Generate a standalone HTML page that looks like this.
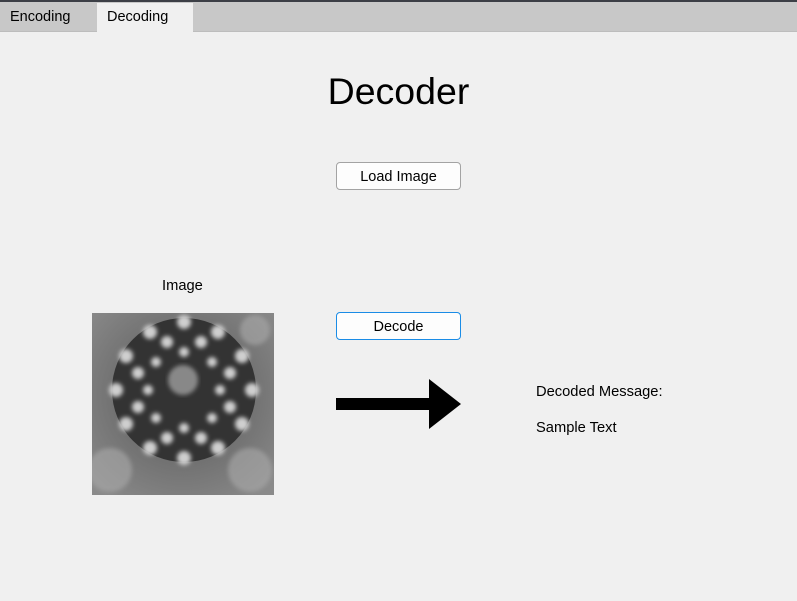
<!DOCTYPE html>
<html><head><style>
body{margin:0;width:797px;height:601px;background:#f0f0f0;font-family:"Liberation Sans",Arial,sans-serif;position:relative;overflow:hidden}
.top{position:absolute;left:0;top:0;width:797px;height:2px;background:#3c3f46}
.bar{position:absolute;left:0;top:2px;width:797px;height:29px;background:#c8c8c8;border-bottom:1px solid #bdbdbd}
.tab{position:absolute;top:3px;height:29px;font-size:14.5px;line-height:29px;color:#000}
.btn{position:absolute;left:336px;width:123px;height:26px;border:1px solid #a3a3a3;border-radius:4px;background:#fdfdfd;font-size:14.5px;text-align:center;line-height:28px}
.t{position:absolute;font-size:14.7px;color:#000}
</style></head><body>
<div class="top"></div><div class="bar"></div>
<div class="tab" style="left:10px">Encoding</div>
<div class="tab" style="left:97px;width:96px;background:#f0f0f0;height:29px"><span style="margin-left:10px">Decoding</span></div>
<div style="position:absolute;left:0;width:797px;top:70px;text-align:center;font-size:37.5px">Decoder</div>
<div class="btn" style="top:162px">Load Image</div>
<div class="btn" style="top:312px;border-color:#1a8ce6">Decode</div>
<div class="t" style="left:162px;top:278px">Image</div>
<div class="t" style="left:536px;top:384px">Decoded Message:</div>
<div class="t" style="left:536px;top:420px">Sample Text</div>
<svg style="position:absolute;left:0;top:0" width="797" height="601">
<defs><radialGradient id="bg" cx="0.5" cy="0.45" r="0.7"><stop offset="0" stop-color="#555"/><stop offset="1" stop-color="#8a8a8a"/></radialGradient>
<filter id="b"><feGaussianBlur stdDeviation="2"/></filter>
<clipPath id="c"><rect x="92" y="313" width="182" height="182"/></clipPath></defs>
<g clip-path="url(#c)">
<rect x="92" y="313" width="182" height="182" fill="url(#bg)"/>
<g filter="url(#b)" opacity=".6" fill="#aaa"><circle cx="110" cy="470" r="22"/><circle cx="250" cy="470" r="22"/><circle cx="255" cy="330" r="15"/></g>
<circle cx="184" cy="390" r="72" fill="#333"/>
<g fill="#cfcfcf" filter="url(#b)">
<circle cx="184" cy="322" r="7"/><circle cx="218" cy="332" r="7"/><circle cx="242" cy="356" r="7"/><circle cx="252" cy="390" r="7"/><circle cx="242" cy="424" r="7"/><circle cx="218" cy="448" r="7"/><circle cx="184" cy="458" r="7"/><circle cx="150" cy="448" r="7"/><circle cx="126" cy="424" r="7"/><circle cx="116" cy="390" r="7"/><circle cx="126" cy="356" r="7"/><circle cx="150" cy="332" r="7"/>
<circle cx="201" cy="342" r="6"/><circle cx="230" cy="373" r="6"/><circle cx="230" cy="407" r="6"/><circle cx="201" cy="438" r="6"/><circle cx="167" cy="438" r="6"/><circle cx="138" cy="407" r="6"/><circle cx="138" cy="373" r="6"/><circle cx="167" cy="342" r="6"/>
<circle cx="184" cy="352" r="5"/><circle cx="212" cy="362" r="5"/><circle cx="220" cy="390" r="5"/><circle cx="212" cy="418" r="5"/><circle cx="184" cy="428" r="5"/><circle cx="156" cy="418" r="5"/><circle cx="148" cy="390" r="5"/><circle cx="156" cy="362" r="5"/>
</g>
<circle cx="183" cy="380" r="15" fill="#888" filter="url(#b)"/>
</g>
<rect x="336" y="398" width="94" height="12" fill="#000"/>
<polygon points="429,379 461,404 429,429" fill="#000"/>
</svg>
</body></html>
